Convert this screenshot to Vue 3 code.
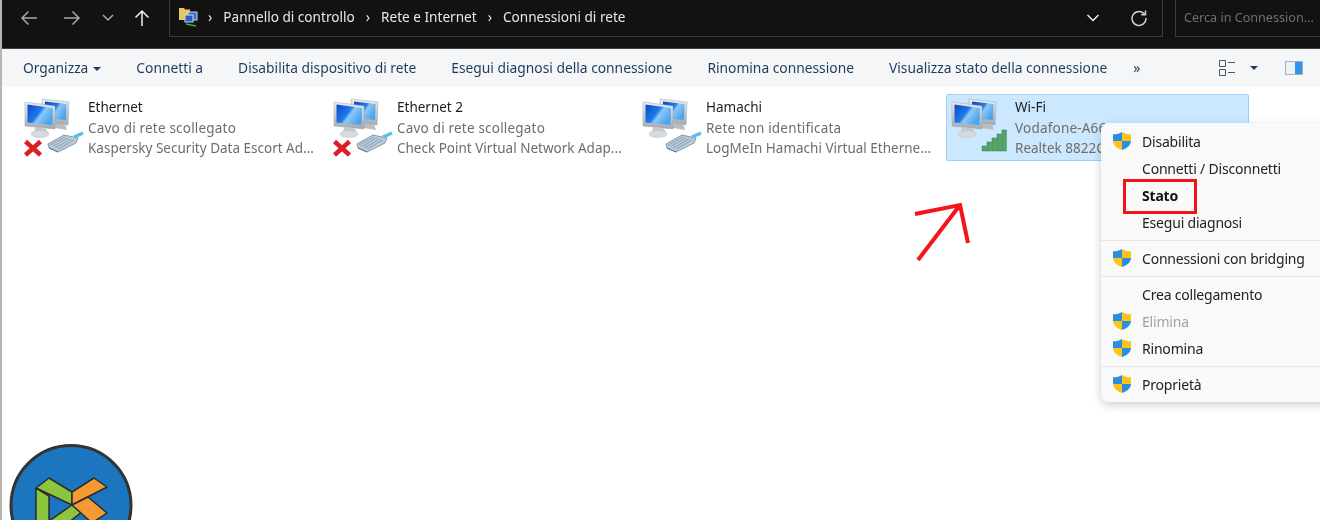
<script setup>
const tools = [
  { label: 'Organizza', caret: true },
  { label: 'Connetti a' },
  { label: 'Disabilita dispositivo di rete' },
  { label: 'Esegui diagnosi della connessione' },
  { label: 'Rinomina connessione' },
  { label: 'Visualizza stato della connessione' },
]
const items = [
  { name: 'Ethernet', status: 'Cavo di rete scollegato', device: 'Kaspersky Security Data Escort Ad...', off: true, plug: true },
  { name: 'Ethernet 2', status: 'Cavo di rete scollegato', device: 'Check Point Virtual Network Adap...', off: true, plug: true },
  { name: 'Hamachi', status: 'Rete non identificata', device: 'LogMeIn Hamachi Virtual Etherne...', plug: true },
  { name: 'Wi-Fi', status: 'Vodafone-A66', device: 'Realtek 8822CE', wifi: true, selected: true },
]
const menu = [
  { label: 'Disabilita', shield: true },
  { label: 'Connetti / Disconnetti' },
  { label: 'Stato', bold: true },
  { label: 'Esegui diagnosi' },
  { sep: true },
  { label: 'Connessioni con bridging', shield: true },
  { sep: true },
  { label: 'Crea collegamento' },
  { label: 'Elimina', shield: true, disabled: true },
  { label: 'Rinomina', shield: true },
  { sep: true },
  { label: 'Proprietà', shield: true },
]
const bars = [0, 1, 2, 3, 4]
</script>

<template>
  <div class="page">
    <svg class="defs" width="0" height="0" aria-hidden="true">
      <defs>
        <linearGradient id="scr" x1="0" y1="0" x2="1" y2="0.6">
          <stop offset="0" stop-color="#0a48cc" />
          <stop offset="0.5" stop-color="#1f7ae8" />
          <stop offset="0.62" stop-color="#8cc8f8" />
          <stop offset="1" stop-color="#4aa4ee" />
        </linearGradient>
        <linearGradient id="body" x1="0" y1="0" x2="0" y2="1">
          <stop offset="0" stop-color="#eef0f2" />
          <stop offset="1" stop-color="#a3a9b0" />
        </linearGradient>
        <symbol id="shield" viewBox="1 0.500 16 17.100" preserveAspectRatio="none">
          <path d="M9 0.500C6.800 2 4.500 2.600 1 2.700V9H9Z" fill="#2b8fe0" />
          <path d="M9 0.500C11.200 2 13.500 2.600 17 2.700V9H9Z" fill="#fcc419" />
          <path d="M1 9C1.200 13 4.400 16 9 17.600V9Z" fill="#fcc419" />
          <path d="M17 9C16.800 13 13.600 16 9 17.600V9Z" fill="#2b8fe0" />
        </symbol>
      </defs>
    </svg>

    <header class="titlebar">
      <nav class="nav">
        <svg width="20" height="18" viewBox="0 0 20 18" class="nav-ic dim"><path d="M18 9H3M9.500 2.500 3 9l6.500 6.500" /></svg>
        <svg width="20" height="18" viewBox="0 0 20 18" class="nav-ic dim"><path d="M2 9h15M10.500 2.500 17 9l-6.500 6.500" /></svg>
        <svg width="14" height="10" viewBox="0 0 14 10" class="nav-ic dim"><path d="M2 2l5 5 5-5" /></svg>
        <svg width="18" height="20" viewBox="0 0 18 20" class="nav-ic bright"><path d="M9 18V3M2.500 9.500 9 3l6.500 6.500" /></svg>
      </nav>
      <div class="address">
        <svg width="21" height="20" viewBox="0 0 21 20" class="addr-ic">
          <path d="M1 1h5l1 1.500h5V13H1Z" fill="#e8c860" />
          <rect x="10" y="5" width="9" height="8" fill="#3a6fd8" stroke="#cfd6df" />
          <rect x="7" y="8" width="8" height="7" fill="#2e5cc4" stroke="#cfd6df" />
          <path d="M8 17l10 2" stroke="#3fae4a" stroke-width="1.500" />
        </svg>
        <span class="crumb-sep">›</span><span>Pannello di controllo</span>
        <span class="crumb-sep">›</span><span>Rete e Internet</span>
        <span class="crumb-sep">›</span><span>Connessioni di rete</span>
        <span class="spacer"></span>
        <svg width="14" height="10" viewBox="0 0 14 10" class="nav-ic bright addr-tool"><path d="M1.500 2l5.500 5.500L12.500 2" /></svg>
        <svg width="18" height="18" viewBox="0 0 18 18" class="nav-ic dim refresh addr-tool"><path d="M14.800 5.500A7 7 0 1 0 16 9M15.500 1.500v4.300h-4.300" /></svg>
      </div>
      <div class="search">Cerca in Connession...</div>
    </header>

    <section class="toolbar">
      <span v-for="t in tools" :key="t.label" class="tool">
        {{ t.label }}<i v-if="t.caret" class="caret"></i>
      </span>
      <span class="more">»</span>
      <span class="spacer"></span>
      <div class="view-tools">
        <svg width="18" height="16" viewBox="0 0 18 16">
          <path d="M0.500 0.500h6v6h-6ZM0.500 9.500h6v6h-6ZM9 2.500h7M9 12.500h7" fill="none" stroke="#4b5563" />
        </svg>
        <i class="caret view-caret"></i>
        <svg width="18" height="14" viewBox="0 0 18 14" class="pane">
          <rect x="0.500" y="0.500" width="17" height="13" fill="#eef2f6" stroke="#a8b2bd" />
          <rect x="10" y="1" width="7" height="12" fill="#2f94ea" />
        </svg>
      </div>
    </section>

    <main class="content">
      <article v-for="it in items" :key="it.name" class="item" :class="{ selected: it.selected }">
        <svg class="net" width="66" height="62" viewBox="0 0 66 62">
          <!-- back monitor -->
          <path d="M20 1 47 4 46 27 20 24Z" fill="url(#body)" stroke="#9aa1a8" stroke-width="0.500" />
          <path d="M23 3.500 44.500 6 44 22 23 20Z" fill="url(#scr)" />
          <path d="M33 26h10l2 6-12-2Z" fill="#b9bec4" />
          <!-- front monitor -->
          <path d="M3 4 33 8 33 31 3 28Z" fill="url(#body)" stroke="#9aa1a8" stroke-width="0.500" />
          <path d="M5.500 6.500 31 10 30.500 27 5.500 24.500Z" fill="url(#scr)" />
          <path d="M13 29l11 1.500 2 5H12Z" fill="#c4c9ce" />
          <ellipse cx="18" cy="36" rx="9" ry="3.500" fill="#d7dadd" stroke="#b9bdc2" stroke-width="0.500" />
          <path v-if="it.off" d="M3.500 43.500 18.500 57M18.500 43.500 3.500 57" stroke="#dc1f26" stroke-width="4.500" />
          <g v-if="it.plug">
            <path d="M26 46 42 37 56 40 54 45 36 54 27 50Z" fill="#bccbda" stroke="#6f869c" stroke-width="0.800" />
            <path d="M28 47 43 39M30.500 48.500 46 40M33 50 49 41M36 51 52 42" stroke="#7f97ad" stroke-width="0.800" />
            <path d="M27 50 36 54" stroke="#5f7488" stroke-width="1" />
            <path d="M52 39 61 35" stroke="#5bbcf0" stroke-width="3.500" />
          </g>
          <g v-if="it.wifi">
            <rect v-for="b in bars" :key="b" :x="33 + b * 5" :y="53 - (5 + b * 4)" width="4.300" :height="5 + b * 4" fill="#55a56a" stroke="#327f49" stroke-width="0.500" />
          </g>
        </svg>
        <div class="texts">
          <div class="name">{{ it.name }}</div>
          <div class="sub status">{{ it.status }}</div>
          <div class="sub">{{ it.device }}</div>
        </div>
      </article>
    </main>

    <ul class="menu">
      <template v-for="(m, i) in menu" :key="i">
        <li v-if="m.sep" class="sep"></li>
        <li v-else class="row" :class="{ bold: m.bold, disabled: m.disabled }">
          <svg v-if="m.shield" class="shield" width="18" height="18"><use href="#shield" /></svg>
          {{ m.label }}
        </li>
      </template>
    </ul>

    <div class="highlight"></div>

    <svg class="arrow" width="70" height="70" viewBox="0 0 70 70">
      <path d="M5 59 47 4M2 13 47 4 55 42" fill="none" stroke="#f5141c" stroke-width="4" />
    </svg>

    <svg class="logo" width="126" height="77" viewBox="0 0 126 77">
      <circle cx="63" cy="62.500" r="60" fill="#1b76bf" stroke="#333" stroke-width="3" />
      <g stroke="#2b2b2b" stroke-width="1.500" stroke-linejoin="round">
        <path d="M28 45 41 35 64 49 64 62 28 45Z" fill="#8cc63f" />
        <path d="M28 45 41 53V78H28Z" fill="#8cc63f" />
        <path d="M41 78 64 62 75 68 60 80Z" fill="#8cc63f" />
        <path d="M64 49 86 35 99 44 64 62Z" fill="#f59a32" />
        <path d="M64 62 80 54 99 70 84 80Z" fill="#f59a32" />
      </g>
    </svg>
  </div>
</template>

<style>
html, body { margin: 0; background: #fff; overflow: hidden; }
</style>

<style scoped>
.page {
  position: relative;
  width: 1320px;
  height: 520px;
  overflow: hidden;
  background: #fff;
  font-family: "Noto Sans", "Open Sans", sans-serif;
  font-size: 14px;
  box-sizing: border-box;
  border-left: 2px solid #b5b5b5;
  filter: blur(0.35px);
}
.defs { position: absolute; }
.titlebar {
  height: 48px;
  margin-left: -2px;
  background: #121212;
  border-bottom: 1px solid #3f3f3f;
  display: flex;
  align-items: flex-start;
  color: #e8e8e8;
}
.nav {
  width: 169px;
  height: 36px;
  display: flex;
  align-items: center;
  padding-left: 19px;
  box-sizing: border-box;
  flex: none;
}
.nav-ic { fill: none; stroke-width: 1.500; flex: none; }
.nav .nav-ic:nth-child(1) { margin-right: 23px; }
.nav .nav-ic:nth-child(2) { margin-right: 19px; }
.nav .nav-ic:nth-child(3) { margin-right: 18px; }
.dim { stroke: #a8a8a8; }
.bright { stroke: #f0f0f0; }
.address {
  width: 994px;
  height: 37px;
  border: 1px solid #3c3c3c;
  border-top: 0;
  box-sizing: border-box;
  display: flex;
  align-items: center;
  padding: 0 14px 3px 8px;
  font-size: 13.600px;
  flex: none;
}
.addr-ic { margin-right: 9px; }
.addr-tool { margin-top: 3px; }
.crumb-sep { margin: 0 11px; font-size: 14px; }
.crumb-sep:first-of-type { margin: 0 11px 0 0; }
.spacer { flex: 1; }
.refresh { margin-left: 30px; stroke: #d0d0d0; }
.search {
  margin-left: 12px;
  flex: 1;
  height: 37px;
  border: 1px solid #3c3c3c;
  border-top: 0;
  border-right: 0;
  box-sizing: border-box;
  padding-left: 8px;
  line-height: 35px;
  color: #6f6f6f;
  font-size: 12.600px;
  white-space: nowrap;
  overflow: hidden;
}
.toolbar {
  height: 38px;
  box-sizing: border-box;
  padding: 0 17px 1px 21px;
  background: #f5f6f7;
  display: flex;
  align-items: center;
  gap: 35px;
  color: #1e3a5f;
  font-size: 13.800px;
}
.tool { white-space: nowrap; }
.caret {
  display: inline-block;
  width: 0;
  height: 0;
  margin-left: 5px;
  vertical-align: 2px;
  border: 4px solid transparent;
  border-top-color: #1e3a5f;
  border-bottom: 0;
}
.more { font-size: 14px; margin-left: -9px; }
.view-tools { display: flex; align-items: center; }
.view-caret { margin: 0 0 0 13px; }
.pane { margin-left: 27px; }
.content {
  display: grid;
  grid-template-columns: repeat(4, 303px);
  column-gap: 6px;
  padding: 7px 0 0 17px;
}
.item {
  height: 67px;
  display: flex;
  box-sizing: border-box;
  border: 1px solid transparent;
  border-radius: 2px;
  padding: 3px 0 0 2px;
  min-width: 0;
}
.item.selected { background: #cce8ff; border-color: #99d1ff; }
.net { flex: none; }
.texts { min-width: 0; margin-top: -1px; }
.name, .sub {
  line-height: 20.500px;
  font-size: 13.500px;
  white-space: nowrap;
}
.name { color: #1c1c1c; }
.sub { color: #6d6d6d; }
.status { letter-spacing: 0.2px; }
.menu {
  position: absolute;
  left: 1099px;
  top: 123px;
  width: 240px;
  margin: 0;
  padding: 5px 0 4px;
  list-style: none;
  background: #f9f9f9;
  border-radius: 8px;
  box-shadow: 0 3px 10px rgba(0, 0, 0, 0.2);
  color: #222;
}
.row {
  position: relative;
  height: 27px;
  line-height: 28.500px;
  padding-left: 41px;
  font-size: 14px;
  letter-spacing: -0.2px;
  white-space: nowrap;
}
.bold { font-weight: 700; color: #111; }
.disabled { color: #a3a3a3; }
.shield { position: absolute; left: 12px; top: 4px; }
.sep { height: 1px; margin: 4px 0; background: #e6e6e6; }
.highlight {
  position: absolute;
  left: 1121px;
  top: 179px;
  width: 74px;
  height: 35px;
  box-sizing: border-box;
  border: 3px solid #f4121a;
}
.arrow { position: absolute; left: 911px; top: 201px; }
.logo { position: absolute; left: 6px; top: 443px; }
</style>
